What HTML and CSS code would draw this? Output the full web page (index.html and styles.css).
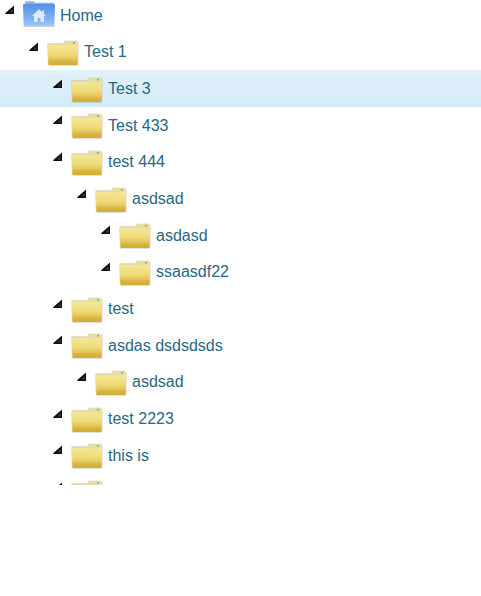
FILE: index.html
```
<!DOCTYPE html>
<html lang="en">
<head>
<meta charset="utf-8">
<title>Folders</title>
<link rel="stylesheet" href="styles.css">
</head>
<body>
<svg class="defs" width="0" height="0" aria-hidden="true">
  <defs>
    <linearGradient id="gold" x1="0" y1="0" x2="0" y2="1">
      <stop offset="0" stop-color="#f6e99b"/><stop offset=".5" stop-color="#eeda77"/><stop offset=".72" stop-color="#e3c659"/><stop offset=".8" stop-color="#d9b640"/><stop offset="1" stop-color="#d3ac34"/>
    </linearGradient>
    <linearGradient id="blue" x1="0" y1="0" x2="0" y2="1">
      <stop offset="0" stop-color="#5590df"/><stop offset=".5" stop-color="#72a8f0"/><stop offset="1" stop-color="#98c7fd"/>
    </linearGradient>
    <symbol id="arrow" viewBox="0 0 10 10">
      <path d="M9 .5V9H.3V8Z" fill="#111"/><path d="M7.500 4.500v3H4.500Z" fill="#454545"/>
    </symbol>
    <symbol id="folder" viewBox="0 0 32 28">
      <path d="M0 4.500Q0 3 1.500 3H16L17.500 .6H30L31.500 2.500L32 5L31.300 25L30 26H2L.8 25Z" fill="#8c8774" opacity=".25"/>
      <path d="M17 6V2.500L18.500 1H29L30.500 2.500V7H17Z" fill="#e8dda0"/>
      <path d="M1.500 3.800H16.500V6H1.500Z" fill="#ddd19c"/>
      <path d="M26 2h2v1.500H26Z" fill="#78b0a0"/>
      <path d="M.8 5.500Q.8 4.700 1.600 4.700H17L18.500 5.600H28.500L29.700 4H30.300Q31.200 4 31.200 5L30.600 24.200Q30.600 25 29.800 25H2.200Q1.400 25 1.400 24.200Z" fill="url(#gold)"/>
    </symbol>
    <symbol id="home" viewBox="0 0 32 28">
      <path d="M.5 26h31" stroke="#777" stroke-width="1.200" opacity=".6"/>
      <path d="M2 6V2.500Q2 1.200 3.500 1.200H10.500L12.500 2.800H30Q31 2.800 31 4V6Z" fill="#86b5ee"/>
      <path d="M0 5Q0 4 1 4H31Q32 4 32 5L31.400 24.500Q31.400 25.400 30.600 25.400H1.400Q.6 25.400.6 24.500Z" fill="url(#blue)"/>
      <path d="M16 9.200L19 12V10.500H20.800V13.700L23 16H21V22H17.500V18H14.500V22H11V16H9Z" fill="#deebff"/>
    </symbol>
  </defs>
</svg>
<div class="tree">
  <div class="row level-0"><svg class="arrow"><use href="#arrow"/></svg><svg class="icon"><use href="#home"/></svg><span>Home</span></div>
  <div class="row level-1"><svg class="arrow"><use href="#arrow"/></svg><svg class="icon"><use href="#folder"/></svg><span>Test 1</span></div>
  <div class="row level-2 selected"><svg class="arrow"><use href="#arrow"/></svg><svg class="icon"><use href="#folder"/></svg><span>Test 3</span></div>
  <div class="row level-2"><svg class="arrow"><use href="#arrow"/></svg><svg class="icon"><use href="#folder"/></svg><span>Test 433</span></div>
  <div class="row level-2"><svg class="arrow"><use href="#arrow"/></svg><svg class="icon"><use href="#folder"/></svg><span>test 444</span></div>
  <div class="row level-3"><svg class="arrow"><use href="#arrow"/></svg><svg class="icon"><use href="#folder"/></svg><span>asdsad</span></div>
  <div class="row level-4"><svg class="arrow"><use href="#arrow"/></svg><svg class="icon"><use href="#folder"/></svg><span>asdasd</span></div>
  <div class="row level-4"><svg class="arrow"><use href="#arrow"/></svg><svg class="icon"><use href="#folder"/></svg><span>ssaasdf22</span></div>
  <div class="row level-2"><svg class="arrow"><use href="#arrow"/></svg><svg class="icon"><use href="#folder"/></svg><span>test</span></div>
  <div class="row level-2"><svg class="arrow"><use href="#arrow"/></svg><svg class="icon"><use href="#folder"/></svg><span>asdas dsdsdsds</span></div>
  <div class="row level-3"><svg class="arrow"><use href="#arrow"/></svg><svg class="icon"><use href="#folder"/></svg><span>asdsad</span></div>
  <div class="row level-2"><svg class="arrow"><use href="#arrow"/></svg><svg class="icon"><use href="#folder"/></svg><span>test 2223</span></div>
  <div class="row level-2"><svg class="arrow"><use href="#arrow"/></svg><svg class="icon"><use href="#folder"/></svg><span>this is</span></div>
  <div class="row level-2"><svg class="arrow"><use href="#arrow"/></svg><svg class="icon"><use href="#folder"/></svg></div>
</div>
</body>
</html>
```
FILE: styles.css
```
body {
  margin: 0;
  background: #fff;
  font: 16px/20px "Liberation Sans", Arial, sans-serif;
  color: #276882;
}
.defs { display: block; height: 0; }
.tree {
  height: 485px;
  overflow: hidden;
}
.row {
  display: flex;
  align-items: flex-start;
  box-sizing: border-box;
  height: 36.68px;
  white-space: nowrap;
}
.row:first-child { margin-top: -3.4px; }
.level-0 { padding-left: 5px; }
.level-1 { padding-left: 29px; }
.level-2 { padding-left: 53px; }
.level-3 { padding-left: 77px; }
.level-4 { padding-left: 101px; }
.selected { background: linear-gradient(#e1f2fa, #d3ebf8); }
.arrow {
  flex: none;
  width: 10px;
  height: 10px;
  margin: 8.8px 8px 0 0;
}
.icon {
  flex: none;
  width: 32px;
  height: 28px;
  margin: 6.8px 5px 0 0;
}
.level-0 .icon { margin-top: 3.4px; }
.row span { margin-top: 9px; }
```
